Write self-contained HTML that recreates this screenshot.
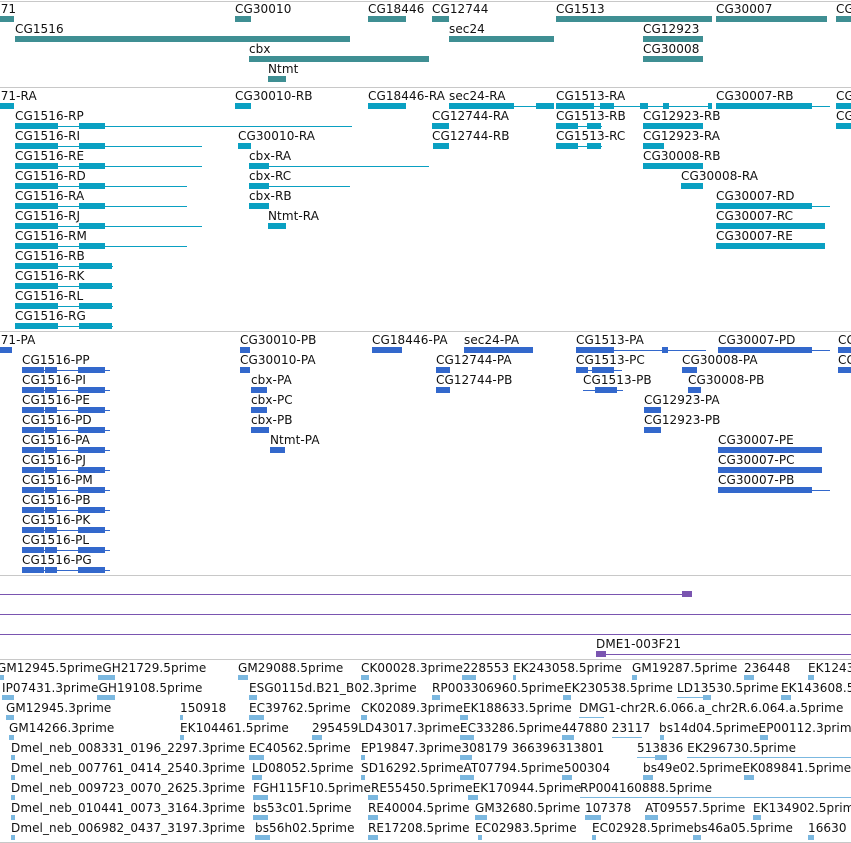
<!DOCTYPE html>
<html><head><meta charset="utf-8"><style>
body{margin:0;width:851px;height:843px;background:#fff;position:relative;overflow:hidden;font-family:"DejaVu Sans","Liberation Sans",sans-serif}
div{position:absolute}
.l{font-size:12px;line-height:14px;letter-spacing:.08px;white-space:nowrap;color:#111}
.hr{left:0;width:851px;height:1px;background:#c8c8c8}
.g{height:6px;background:#3f8f93}
.a{height:1px;background:#0aa0c2}.A{height:6px;background:#0aa0c2}
.b{height:1px;background:#3368cc}.B{height:6px;background:#3368cc}
.e{height:5px;background:#7bb8e0}.E{height:1px;background:#7bb8e0}
.p{height:1px;background:#7a55b0}.P{height:6px;background:#7a55b0}
</style></head><body>
<div class="hr" style="top:1px"></div>
<div class="hr" style="top:87px"></div>
<div class="hr" style="top:331px"></div>
<div class="hr" style="top:575px"></div>
<div class="hr" style="top:659px"></div>
<div class="hr" style="top:842px"></div>

<div class="l" style="left:-7px;top:2px">671</div><div class="g" style="left:0;top:16px;width:14px"></div>
<div class="l" style="left:235px;top:2px">CG30010</div><div class="g" style="left:235px;top:16px;width:16px"></div>
<div class="l" style="left:368px;top:2px">CG18446</div><div class="g" style="left:368px;top:16px;width:38px"></div>
<div class="l" style="left:432px;top:2px">CG12744</div><div class="g" style="left:432px;top:16px;width:17px"></div>
<div class="l" style="left:556px;top:2px">CG1513</div><div class="g" style="left:556px;top:16px;width:156px"></div>
<div class="l" style="left:716px;top:2px">CG30007</div><div class="g" style="left:716px;top:16px;width:111px"></div>
<div class="l" style="left:836px;top:2px">CG</div><div class="g" style="left:836px;top:16px;width:15px"></div>
<div class="l" style="left:15px;top:22px">CG1516</div><div class="g" style="left:15px;top:36px;width:335px"></div>
<div class="l" style="left:449px;top:22px">sec24</div><div class="g" style="left:449px;top:36px;width:105px"></div>
<div class="l" style="left:643px;top:22px">CG12923</div><div class="g" style="left:643px;top:36px;width:60px"></div>
<div class="l" style="left:249px;top:42px">cbx</div><div class="g" style="left:249px;top:56px;width:180px"></div>
<div class="l" style="left:643px;top:42px">CG30008</div><div class="g" style="left:643px;top:56px;width:60px"></div>
<div class="l" style="left:268px;top:62px">Ntmt</div><div class="g" style="left:268px;top:76px;width:18px"></div>

<div class="l" style="left:-7px;top:89px">671-RA</div><div class="A" style="left:0;top:103px;width:14px"></div>
<div class="l" style="left:235px;top:89px">CG30010-RB</div><div class="A" style="left:235px;top:103px;width:16px"></div>
<div class="l" style="left:368px;top:89px">CG18446-RA</div><div class="A" style="left:368px;top:103px;width:38px"></div>
<div class="l" style="left:449px;top:89px">sec24-RA</div><div class="a" style="left:449px;top:106px;width:105px"></div><div class="A" style="left:449px;top:103px;width:65px"></div><div class="A" style="left:536px;top:103px;width:18px"></div>
<div class="l" style="left:556px;top:89px">CG1513-RA</div><div class="a" style="left:556px;top:106px;width:156px"></div><div class="A" style="left:556px;top:103px;width:38px"></div><div class="A" style="left:600px;top:103px;width:14px"></div><div class="A" style="left:640px;top:103px;width:8px"></div><div class="A" style="left:663px;top:103px;width:6px"></div><div class="A" style="left:708px;top:103px;width:4px"></div>
<div class="l" style="left:716px;top:89px">CG30007-RB</div><div class="a" style="left:716px;top:106px;width:114px"></div><div class="A" style="left:716px;top:103px;width:96px"></div>
<div class="l" style="left:836px;top:89px">CG</div><div class="A" style="left:836px;top:103px;width:15px"></div>
<div class="l" style="left:15px;top:109px">CG1516-RP</div><div class="a" style="left:15px;top:126px;width:337px"></div><div class="A" style="left:15px;top:123px;width:43px"></div><div class="A" style="left:79px;top:123px;width:26px"></div>
<div class="l" style="left:432px;top:109px">CG12744-RA</div><div class="A" style="left:432px;top:123px;width:17px"></div>
<div class="l" style="left:556px;top:109px">CG1513-RB</div><div class="a" style="left:556px;top:126px;width:46px"></div><div class="A" style="left:556px;top:123px;width:22px"></div><div class="A" style="left:587px;top:123px;width:14px"></div>
<div class="l" style="left:643px;top:109px">CG12923-RB</div><div class="A" style="left:643px;top:123px;width:60px"></div>
<div class="l" style="left:836px;top:109px">CG</div><div class="A" style="left:836px;top:123px;width:15px"></div>
<div class="l" style="left:15px;top:129px">CG1516-RI</div><div class="a" style="left:15px;top:146px;width:187px"></div><div class="A" style="left:15px;top:143px;width:43px"></div><div class="A" style="left:79px;top:143px;width:26px"></div>
<div class="l" style="left:238px;top:129px">CG30010-RA</div><div class="A" style="left:238px;top:143px;width:13px"></div>
<div class="l" style="left:432px;top:129px">CG12744-RB</div><div class="A" style="left:433px;top:143px;width:16px"></div>
<div class="l" style="left:556px;top:129px">CG1513-RC</div><div class="a" style="left:556px;top:146px;width:46px"></div><div class="A" style="left:556px;top:143px;width:22px"></div><div class="A" style="left:587px;top:143px;width:14px"></div>
<div class="l" style="left:643px;top:129px">CG12923-RA</div><div class="A" style="left:643px;top:143px;width:21px"></div>
<div class="l" style="left:15px;top:149px">CG1516-RE</div><div class="a" style="left:15px;top:166px;width:187px"></div><div class="A" style="left:15px;top:163px;width:43px"></div><div class="A" style="left:79px;top:163px;width:26px"></div>
<div class="l" style="left:249px;top:149px">cbx-RA</div><div class="a" style="left:249px;top:166px;width:180px"></div><div class="A" style="left:249px;top:163px;width:20px"></div>
<div class="l" style="left:643px;top:149px">CG30008-RB</div><div class="A" style="left:643px;top:163px;width:60px"></div>
<div class="l" style="left:15px;top:169px">CG1516-RD</div><div class="a" style="left:15px;top:186px;width:172px"></div><div class="A" style="left:15px;top:183px;width:43px"></div><div class="A" style="left:79px;top:183px;width:26px"></div>
<div class="l" style="left:249px;top:169px">cbx-RC</div><div class="a" style="left:249px;top:186px;width:101px"></div><div class="A" style="left:249px;top:183px;width:20px"></div>
<div class="l" style="left:681px;top:169px">CG30008-RA</div><div class="A" style="left:681px;top:183px;width:22px"></div>
<div class="l" style="left:15px;top:189px">CG1516-RA</div><div class="a" style="left:15px;top:206px;width:172px"></div><div class="A" style="left:15px;top:203px;width:43px"></div><div class="A" style="left:79px;top:203px;width:26px"></div>
<div class="l" style="left:249px;top:189px">cbx-RB</div><div class="A" style="left:249px;top:203px;width:20px"></div>
<div class="l" style="left:716px;top:189px">CG30007-RD</div><div class="a" style="left:716px;top:206px;width:114px"></div><div class="A" style="left:716px;top:203px;width:96px"></div>
<div class="l" style="left:15px;top:209px">CG1516-RJ</div><div class="a" style="left:15px;top:226px;width:187px"></div><div class="A" style="left:15px;top:223px;width:43px"></div><div class="A" style="left:79px;top:223px;width:26px"></div>
<div class="l" style="left:268px;top:209px">Ntmt-RA</div><div class="A" style="left:268px;top:223px;width:18px"></div>
<div class="l" style="left:716px;top:209px">CG30007-RC</div><div class="A" style="left:716px;top:223px;width:109px"></div>
<div class="l" style="left:15px;top:229px">CG1516-RM</div><div class="a" style="left:15px;top:246px;width:172px"></div><div class="A" style="left:15px;top:243px;width:43px"></div><div class="A" style="left:79px;top:243px;width:26px"></div>
<div class="l" style="left:716px;top:229px">CG30007-RE</div><div class="A" style="left:716px;top:243px;width:109px"></div>
<div class="l" style="left:15px;top:249px">CG1516-RB</div><div class="a" style="left:15px;top:266px;width:98px"></div><div class="A" style="left:15px;top:263px;width:43px"></div><div class="A" style="left:79px;top:263px;width:33px"></div>
<div class="l" style="left:15px;top:269px">CG1516-RK</div><div class="a" style="left:15px;top:286px;width:98px"></div><div class="A" style="left:15px;top:283px;width:43px"></div><div class="A" style="left:79px;top:283px;width:33px"></div>
<div class="l" style="left:15px;top:289px">CG1516-RL</div><div class="a" style="left:15px;top:306px;width:98px"></div><div class="A" style="left:15px;top:303px;width:43px"></div><div class="A" style="left:79px;top:303px;width:33px"></div>
<div class="l" style="left:15px;top:309px">CG1516-RG</div><div class="a" style="left:15px;top:326px;width:98px"></div><div class="A" style="left:15px;top:323px;width:43px"></div><div class="A" style="left:79px;top:323px;width:33px"></div>

<div class="l" style="left:-7px;top:333px">671-PA</div><div class="B" style="left:0;top:347px;width:12px"></div>
<div class="l" style="left:240px;top:333px">CG30010-PB</div><div class="B" style="left:240px;top:347px;width:10px"></div>
<div class="l" style="left:372px;top:333px">CG18446-PA</div><div class="B" style="left:372px;top:347px;width:30px"></div>
<div class="l" style="left:464px;top:333px">sec24-PA</div><div class="B" style="left:464px;top:347px;width:69px"></div>
<div class="l" style="left:576px;top:333px">CG1513-PA</div><div class="b" style="left:576px;top:350px;width:130px"></div><div class="B" style="left:576px;top:347px;width:38px"></div><div class="B" style="left:662px;top:347px;width:6px"></div>
<div class="l" style="left:718px;top:333px">CG30007-PD</div><div class="b" style="left:718px;top:350px;width:112px"></div><div class="B" style="left:718px;top:347px;width:94px"></div>
<div class="l" style="left:838px;top:333px">CG</div><div class="B" style="left:838px;top:347px;width:13px"></div>
<div class="l" style="left:240px;top:353px">CG30010-PA</div><div class="B" style="left:240px;top:367px;width:10px"></div>
<div class="l" style="left:436px;top:353px">CG12744-PA</div><div class="B" style="left:436px;top:367px;width:14px"></div>
<div class="l" style="left:576px;top:353px">CG1513-PC</div><div class="b" style="left:576px;top:370px;width:46px"></div><div class="B" style="left:576px;top:367px;width:12px"></div><div class="B" style="left:592px;top:367px;width:22px"></div>
<div class="l" style="left:682px;top:353px">CG30008-PA</div><div class="B" style="left:682px;top:367px;width:15px"></div>
<div class="l" style="left:838px;top:353px">CG</div><div class="B" style="left:838px;top:367px;width:13px"></div>
<div class="l" style="left:251px;top:373px">cbx-PA</div><div class="B" style="left:251px;top:387px;width:16px"></div>
<div class="l" style="left:436px;top:373px">CG12744-PB</div><div class="B" style="left:436px;top:387px;width:14px"></div>
<div class="l" style="left:583px;top:373px">CG1513-PB</div><div class="b" style="left:583px;top:390px;width:40px"></div><div class="B" style="left:595px;top:387px;width:22px"></div>
<div class="l" style="left:688px;top:373px">CG30008-PB</div><div class="B" style="left:688px;top:387px;width:13px"></div>
<div class="l" style="left:251px;top:393px">cbx-PC</div><div class="B" style="left:251px;top:407px;width:16px"></div>
<div class="l" style="left:644px;top:393px">CG12923-PA</div><div class="B" style="left:644px;top:407px;width:17px"></div>
<div class="l" style="left:251px;top:413px">cbx-PB</div><div class="B" style="left:251px;top:427px;width:18px"></div>
<div class="l" style="left:644px;top:413px">CG12923-PB</div><div class="B" style="left:644px;top:427px;width:17px"></div>
<div class="l" style="left:270px;top:433px">Ntmt-PA</div><div class="B" style="left:270px;top:447px;width:15px"></div>
<div class="l" style="left:718px;top:433px">CG30007-PE</div><div class="B" style="left:718px;top:447px;width:104px"></div>
<div class="l" style="left:718px;top:453px">CG30007-PC</div><div class="B" style="left:718px;top:467px;width:104px"></div>
<div class="l" style="left:718px;top:473px">CG30007-PB</div><div class="b" style="left:718px;top:490px;width:112px"></div><div class="B" style="left:718px;top:487px;width:94px"></div>
<div class="l" style="left:22px;top:353px">CG1516-PP</div><div class="b" style="left:22px;top:370px;width:88px"></div><div class="B" style="left:22px;top:367px;width:22px"></div><div class="B" style="left:45px;top:367px;width:12px"></div><div class="B" style="left:78px;top:367px;width:27px"></div>
<div class="l" style="left:22px;top:373px">CG1516-PI</div><div class="b" style="left:22px;top:390px;width:88px"></div><div class="B" style="left:22px;top:387px;width:22px"></div><div class="B" style="left:45px;top:387px;width:12px"></div><div class="B" style="left:78px;top:387px;width:27px"></div>
<div class="l" style="left:22px;top:393px">CG1516-PE</div><div class="b" style="left:22px;top:410px;width:88px"></div><div class="B" style="left:22px;top:407px;width:22px"></div><div class="B" style="left:45px;top:407px;width:12px"></div><div class="B" style="left:78px;top:407px;width:27px"></div>
<div class="l" style="left:22px;top:413px">CG1516-PD</div><div class="b" style="left:22px;top:430px;width:88px"></div><div class="B" style="left:22px;top:427px;width:22px"></div><div class="B" style="left:45px;top:427px;width:12px"></div><div class="B" style="left:78px;top:427px;width:27px"></div>
<div class="l" style="left:22px;top:433px">CG1516-PA</div><div class="b" style="left:22px;top:450px;width:88px"></div><div class="B" style="left:22px;top:447px;width:22px"></div><div class="B" style="left:45px;top:447px;width:12px"></div><div class="B" style="left:78px;top:447px;width:27px"></div>
<div class="l" style="left:22px;top:453px">CG1516-PJ</div><div class="b" style="left:22px;top:470px;width:88px"></div><div class="B" style="left:22px;top:467px;width:22px"></div><div class="B" style="left:45px;top:467px;width:12px"></div><div class="B" style="left:78px;top:467px;width:27px"></div>
<div class="l" style="left:22px;top:473px">CG1516-PM</div><div class="b" style="left:22px;top:490px;width:88px"></div><div class="B" style="left:22px;top:487px;width:22px"></div><div class="B" style="left:45px;top:487px;width:12px"></div><div class="B" style="left:78px;top:487px;width:27px"></div>
<div class="l" style="left:22px;top:493px">CG1516-PB</div><div class="b" style="left:22px;top:510px;width:88px"></div><div class="B" style="left:22px;top:507px;width:22px"></div><div class="B" style="left:45px;top:507px;width:12px"></div><div class="B" style="left:78px;top:507px;width:27px"></div>
<div class="l" style="left:22px;top:513px">CG1516-PK</div><div class="b" style="left:22px;top:530px;width:88px"></div><div class="B" style="left:22px;top:527px;width:22px"></div><div class="B" style="left:45px;top:527px;width:12px"></div><div class="B" style="left:78px;top:527px;width:27px"></div>
<div class="l" style="left:22px;top:533px">CG1516-PL</div><div class="b" style="left:22px;top:550px;width:88px"></div><div class="B" style="left:22px;top:547px;width:22px"></div><div class="B" style="left:45px;top:547px;width:12px"></div><div class="B" style="left:78px;top:547px;width:27px"></div>
<div class="l" style="left:22px;top:553px">CG1516-PG</div><div class="b" style="left:22px;top:570px;width:88px"></div><div class="B" style="left:22px;top:567px;width:22px"></div><div class="B" style="left:45px;top:567px;width:12px"></div><div class="B" style="left:78px;top:567px;width:27px"></div>

<div class="p" style="left:0;top:594px;width:690px"></div><div class="P" style="left:682px;top:591px;width:10px"></div>
<div class="p" style="left:0;top:614px;width:851px"></div>
<div class="p" style="left:0;top:634px;width:851px"></div>
<div class="l" style="left:596px;top:637px">DME1-003F21</div>
<div class="p" style="left:596px;top:654px;width:255px"></div><div class="P" style="left:596px;top:651px;width:10px"></div>

<div class="l" style="left:-3px;top:661px">GM12945.5primeGH21729.5prime</div>
<div class="l" style="left:238px;top:661px">GM29088.5prime</div>
<div class="l" style="left:361px;top:661px">CK00028.3prime228553 EK243058.5prime</div>
<div class="l" style="left:632px;top:661px">GM19287.5prime</div>
<div class="l" style="left:744px;top:661px">236448</div>
<div class="l" style="left:808px;top:661px">EK1243</div>
<div class="l" style="left:2px;top:681px">IP07431.3primeGH19108.5prime</div>
<div class="l" style="left:249px;top:681px">ESG0115d.B21_B02.3prime</div>
<div class="l" style="left:432px;top:681px">RP003306960.5primeEK230538.5prime</div>
<div class="l" style="left:677px;top:681px">LD13530.5prime</div>
<div class="l" style="left:781px;top:681px">EK143608.5</div>
<div class="l" style="left:6px;top:701px">GM12945.3prime</div>
<div class="l" style="left:180px;top:701px">150918</div>
<div class="l" style="left:249px;top:701px">EC39762.5prime</div>
<div class="l" style="left:361px;top:701px">CK02089.3primeEK188633.5prime</div>
<div class="l" style="left:579px;top:701px">DMG1-chr2R.6.066.a_chr2R.6.064.a.5prime</div>
<div class="l" style="left:9px;top:721px">GM14266.3prime</div>
<div class="l" style="left:180px;top:721px">EK104461.5prime</div>
<div class="l" style="left:312px;top:721px">295459LD43017.3primeEC33286.5prime447880 23117</div>
<div class="l" style="left:659px;top:721px">bs14d04.5primeEP00112.3prime</div>
<div class="l" style="left:11px;top:741px">Dmel_neb_008331_0196_2297.3prime</div>
<div class="l" style="left:249px;top:741px">EC40562.5prime</div>
<div class="l" style="left:361px;top:741px">EP19847.3prime308179 366396313801</div>
<div class="l" style="left:637px;top:741px">513836 EK296730.5prime</div>
<div class="l" style="left:11px;top:761px">Dmel_neb_007761_0414_2540.3prime</div>
<div class="l" style="left:252px;top:761px">LD08052.5prime</div>
<div class="l" style="left:361px;top:761px">SD16292.5primeAT07794.5prime500304</div>
<div class="l" style="left:643px;top:761px">bs49e02.5primeEK089841.5prime</div>
<div class="l" style="left:11px;top:781px">Dmel_neb_009723_0070_2625.3prime</div>
<div class="l" style="left:253px;top:781px">FGH115F10.5primeRE55450.5primeEK170944.5prime</div>
<div class="l" style="left:580px;top:781px">RP004160888.5prime</div>
<div class="l" style="left:11px;top:801px">Dmel_neb_010441_0073_3164.3prime</div>
<div class="l" style="left:253px;top:801px">bs53c01.5prime</div>
<div class="l" style="left:368px;top:801px">RE40004.5prime</div>
<div class="l" style="left:475px;top:801px">GM32680.5prime</div>
<div class="l" style="left:585px;top:801px">107378</div>
<div class="l" style="left:645px;top:801px">AT09557.5prime</div>
<div class="l" style="left:753px;top:801px">EK134902.5prim</div>
<div class="l" style="left:11px;top:821px">Dmel_neb_006982_0437_3197.3prime</div>
<div class="l" style="left:255px;top:821px">bs56h02.5prime</div>
<div class="l" style="left:368px;top:821px">RE17208.5prime</div>
<div class="l" style="left:475px;top:821px">EC02983.5prime</div>
<div class="l" style="left:592px;top:821px">EC02928.5primebs46a05.5prime</div>
<div class="l" style="left:808px;top:821px">16630</div>

<div class="e" style="left:0;top:675px;width:4px"></div><div class="e" style="left:98px;top:675px;width:17px"></div><div class="e" style="left:238px;top:675px;width:10px"></div><div class="e" style="left:361px;top:675px;width:8px"></div><div class="e" style="left:462px;top:675px;width:14px"></div><div class="e" style="left:513px;top:675px;width:3px"></div><div class="e" style="left:632px;top:675px;width:5px"></div><div class="e" style="left:744px;top:675px;width:10px"></div><div class="e" style="left:808px;top:675px;width:6px"></div>
<div class="e" style="left:2px;top:695px;width:12px"></div><div class="e" style="left:97px;top:695px;width:18px"></div><div class="e" style="left:249px;top:695px;width:8px"></div><div class="e" style="left:432px;top:695px;width:8px"></div><div class="e" style="left:563px;top:695px;width:8px"></div><div class="E" style="left:677px;top:697px;width:33px"></div><div class="e" style="left:703px;top:695px;width:8px"></div><div class="e" style="left:781px;top:695px;width:10px"></div>
<div class="e" style="left:6px;top:715px;width:8px"></div><div class="e" style="left:180px;top:715px;width:3px"></div><div class="e" style="left:249px;top:715px;width:15px"></div><div class="e" style="left:361px;top:715px;width:6px"></div><div class="e" style="left:460px;top:715px;width:8px"></div><div class="E" style="left:579px;top:717px;width:25px"></div>
<div class="e" style="left:9px;top:735px;width:5px"></div><div class="e" style="left:180px;top:735px;width:4px"></div><div class="e" style="left:312px;top:735px;width:10px"></div><div class="e" style="left:460px;top:735px;width:14px"></div><div class="e" style="left:562px;top:735px;width:12px"></div><div class="E" style="left:612px;top:737px;width:30px"></div><div class="e" style="left:660px;top:735px;width:4px"></div><div class="e" style="left:760px;top:735px;width:8px"></div>
<div class="e" style="left:11px;top:755px;width:4px"></div><div class="e" style="left:249px;top:755px;width:15px"></div><div class="e" style="left:361px;top:755px;width:4px"></div><div class="e" style="left:460px;top:755px;width:12px"></div><div class="E" style="left:637px;top:757px;width:30px"></div><div class="e" style="left:655px;top:755px;width:12px"></div><div class="E" style="left:687px;top:757px;width:164px"></div>
<div class="e" style="left:11px;top:775px;width:4px"></div><div class="e" style="left:252px;top:775px;width:10px"></div><div class="e" style="left:361px;top:775px;width:4px"></div><div class="e" style="left:460px;top:775px;width:14px"></div><div class="e" style="left:562px;top:775px;width:10px"></div><div class="e" style="left:643px;top:775px;width:10px"></div><div class="e" style="left:744px;top:775px;width:10px"></div>
<div class="e" style="left:11px;top:795px;width:4px"></div><div class="e" style="left:253px;top:795px;width:15px"></div><div class="e" style="left:368px;top:795px;width:10px"></div><div class="e" style="left:468px;top:795px;width:10px"></div><div class="E" style="left:580px;top:797px;width:271px"></div>
<div class="e" style="left:11px;top:815px;width:4px"></div><div class="e" style="left:253px;top:815px;width:15px"></div><div class="e" style="left:368px;top:815px;width:10px"></div><div class="e" style="left:475px;top:815px;width:12px"></div><div class="e" style="left:585px;top:815px;width:16px"></div><div class="e" style="left:645px;top:815px;width:13px"></div><div class="e" style="left:753px;top:815px;width:8px"></div>
<div class="e" style="left:11px;top:835px;width:4px"></div><div class="e" style="left:255px;top:835px;width:15px"></div><div class="e" style="left:368px;top:835px;width:10px"></div><div class="e" style="left:478px;top:835px;width:4px"></div><div class="e" style="left:592px;top:835px;width:4px"></div><div class="e" style="left:693px;top:835px;width:8px"></div><div class="e" style="left:808px;top:835px;width:6px"></div>
</body></html>
